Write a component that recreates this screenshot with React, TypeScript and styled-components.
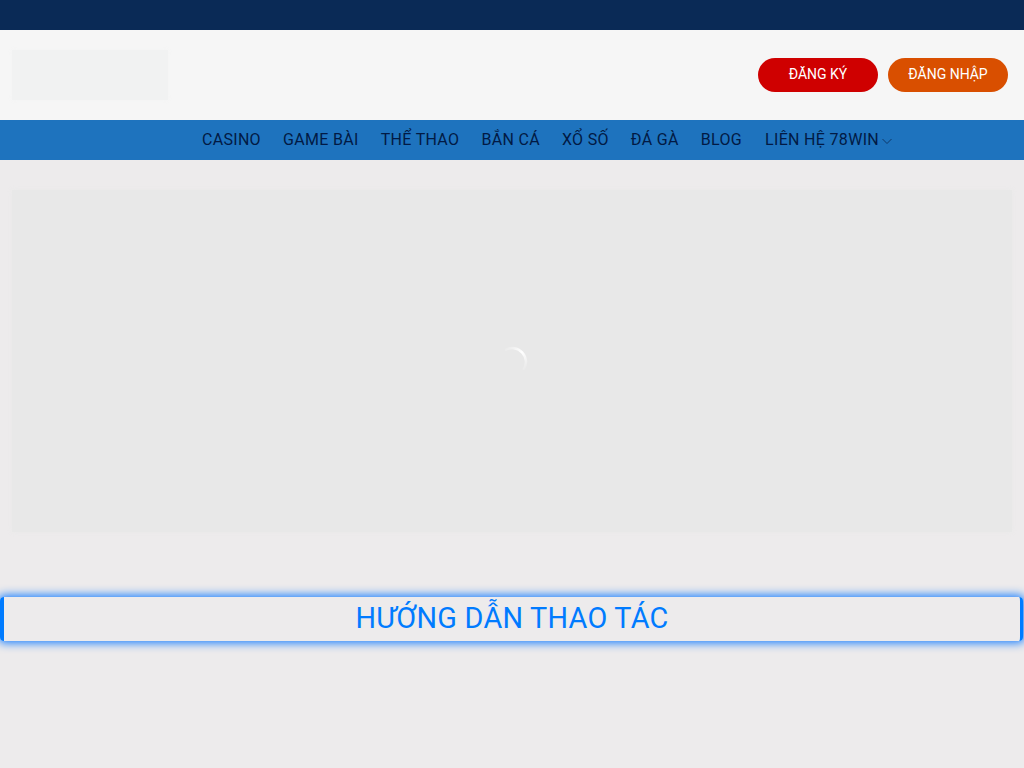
import React from "react";
import styled, { createGlobalStyle } from "styled-components";

const Global = createGlobalStyle`
  html, body { margin: 0; padding: 0; background: #edebec; }
  body { font-family: Roboto, "Liberation Sans", sans-serif; height: 768px; overflow: hidden; }
`;

const TopBar = styled.div`
  height: 30px;
  background: #0a2a56;
`;

const Header = styled.header`
  height: 90px;
  background: #f6f6f6;
  display: flex;
  align-items: center;
  justify-content: space-between;
  padding: 0 16px 0 12px;
`;

const LogoPlaceholder = styled.div`
  width: 156px;
  height: 50px;
  background: #f1f2f2;
  box-shadow: 0 0 6px #f3f4f4;
`;

const Actions = styled.div`
  display: flex;
  gap: 10px;
  margin-top: -1px;
`;

const Pill = styled.a<{ $bg: string }>`
  width: 120px;
  height: 34px;
  border-radius: 17px;
  background: ${(p) => p.$bg};
  color: #fff;
  font-size: 14px;
  line-height: 32px;
  text-align: center;
`;

const Nav = styled.nav`
  height: 40px;
  background: #1e73be;
  display: flex;
  justify-content: center;
  align-items: center;
  gap: 22px;
  padding-left: 71px;
`;

const NavItem = styled.a<{ $nudge?: boolean }>`
  display: flex;
  align-items: center;
  color: #021a44;
  font-size: 16px;
  letter-spacing: 0.32px;
  line-height: 38px;
  height: 40px;
  margin-left: ${(p) => (p.$nudge ? "1px" : "0")};
`;

const Chevron = styled.svg`
  width: 12px;
  height: 12px;
  margin: 1px 0 0 2px;
`;

const Main = styled.main`
  padding: 30px 12px 0;
`;

const Banner = styled.div`
  height: 342px;
  background: #e8e8e8;
  box-shadow: 0 0 6px #e9e9e9;
  display: flex;
  align-items: center;
  justify-content: center;
`;

const Spinner = styled.svg`
  width: 32px;
  height: 32px;
  margin-top: 2px;
`;

const HeadingBand = styled.div`
  padding: 65px 1px 0 0;
  margin: 0 -12px;
`;

const Heading = styled.h2`
  margin: 0;
  height: 44px;
  box-sizing: border-box;
  border-style: solid;
  border-color: #007bff;
  border-width: 0 3px 0 4px;
  border-radius: 4px;
  box-shadow: 0 0 10px 2px #1a7fff;
  color: #007bff;
  font-size: 28.8px;
  font-weight: 400;
  letter-spacing: 0.25px;
  line-height: 42px;
  text-align: center;
`;

const items = ["CASINO", "GAME BÀI", "THỂ THAO", "BẮN CÁ", "XỔ SỐ", "ĐÁ GÀ", "BLOG"];

export default function App() {
  return (
    <>
      <Global />
      <TopBar />
      <Header>
        <LogoPlaceholder />
        <Actions>
          <Pill $bg="#cf0000">ĐĂNG KÝ</Pill>
          <Pill $bg="#d94f00">ĐĂNG NHẬP</Pill>
        </Actions>
      </Header>
      <Nav>
        {items.map((t) => (
          <NavItem key={t}>{t}</NavItem>
        ))}
        <NavItem $nudge>
          LIÊN HỆ 78WIN
          <Chevron viewBox="0 0 12 12" fill="none" stroke="#0a2a56" strokeOpacity="0.8" strokeWidth="1">
            <path d="M1.5 4l4.5 4.5L10.5 4" />
          </Chevron>
        </NavItem>
      </Nav>
      <Main>
        <Banner>
          <Spinner viewBox="0 0 32 32" fill="none">
            <defs>
              <linearGradient id="sp" gradientUnits="userSpaceOnUse" x1="8" y1="2" x2="30" y2="24">
                <stop offset="0" stopColor="#fff" stopOpacity="0" />
                <stop offset="0.5" stopColor="#fff" stopOpacity="1" />
                <stop offset="1" stopColor="#fff" stopOpacity="0" />
              </linearGradient>
            </defs>
            <path d="M9 3.9A14 14 0 0 1 27.5 24" stroke="url(#sp)" strokeWidth="2.5" />
          </Spinner>
        </Banner>
        <HeadingBand>
          <Heading>HƯỚNG DẪN THAO TÁC</Heading>
        </HeadingBand>
      </Main>
    </>
  );
}
